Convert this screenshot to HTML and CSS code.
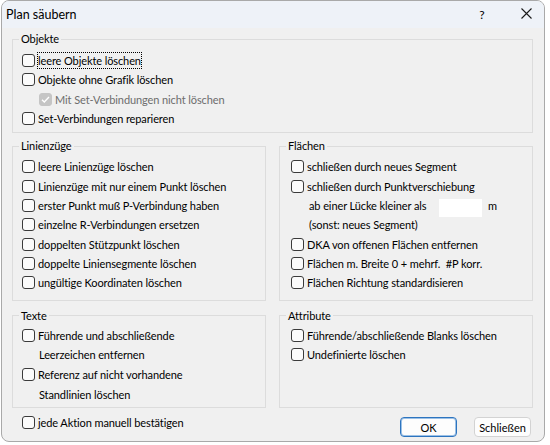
FILE: index.html
```html
<!DOCTYPE html>
<html lang="de">
<head>
<meta charset="utf-8">
<title>Plan säubern</title>
<link rel="stylesheet" href="styles.css">
</head>
<body>
<div class="window">
  <div class="titlebar">
    <span class="title">Plan säubern</span>
    <span class="help">?</span>
    <span class="close"><svg width="11" height="11" viewBox="0 0 11 11"><path d="M0.5 0.5 L10.5 10.5 M10.5 0.5 L0.5 10.5" stroke="#1a1a1a" stroke-width="1.1" fill="none"/></svg></span>
  </div>
  <div class="content">
    <fieldset class="group g-objekte">
      <legend>Objekte</legend>
      <div class="row"><span class="cb"></span><span class="txt focus">leere Objekte löschen</span></div>
      <div class="row"><span class="cb"></span><span class="txt">Objekte ohne Grafik löschen</span></div>
      <div class="row sub disabled"><span class="cb checked"><svg width="11" height="11" viewBox="0 0 11 11"><path d="M2 5.8 L4.3 8 L9 3" stroke="#fff" stroke-width="1.4" fill="none"/></svg></span><span class="txt">Mit Set-Verbindungen nicht löschen</span></div>
      <div class="row"><span class="cb"></span><span class="txt">Set-Verbindungen reparieren</span></div>
    </fieldset>

    <div class="pair pair-mid">
      <fieldset class="group g-left g-mid">
        <legend>Linienzüge</legend>
        <div class="row"><span class="cb"></span><span class="txt">leere Linienzüge löschen</span></div>
        <div class="row"><span class="cb"></span><span class="txt">Linienzüge mit nur einem Punkt löschen</span></div>
        <div class="row"><span class="cb"></span><span class="txt">erster Punkt muß P-Verbindung haben</span></div>
        <div class="row"><span class="cb"></span><span class="txt">einzelne R-Verbindungen ersetzen</span></div>
        <div class="row"><span class="cb"></span><span class="txt">doppelten Stützpunkt löschen</span></div>
        <div class="row"><span class="cb"></span><span class="txt">doppelte Liniensegmente löschen</span></div>
        <div class="row"><span class="cb"></span><span class="txt">ungültige Koordinaten löschen</span></div>
      </fieldset>
      <fieldset class="group g-right g-mid">
        <legend>Flächen</legend>
        <div class="row"><span class="cb"></span><span class="txt">schließen durch neues Segment</span></div>
        <div class="row"><span class="cb"></span><span class="txt">schließen durch Punktverschiebung</span></div>
        <div class="row indent"><span class="txt gaplabel">ab einer Lücke kleiner als</span><span class="field"></span><span class="unit">m</span></div>
        <div class="row indent"><span class="txt">(sonst: neues Segment)</span></div>
        <div class="row"><span class="cb"></span><span class="txt">DKA von offenen Flächen entfernen</span></div>
        <div class="row"><span class="cb"></span><span class="txt">Flächen m. Breite 0 + mehrf.&nbsp; #P korr.</span></div>
        <div class="row"><span class="cb"></span><span class="txt">Flächen Richtung standardisieren</span></div>
      </fieldset>
    </div>

    <div class="pair pair-low">
      <fieldset class="group g-left g-low">
        <legend>Texte</legend>
        <div class="row"><span class="cb"></span><span class="txt">Führende und abschließende</span></div>
        <div class="row indent"><span class="txt">Leerzeichen entfernen</span></div>
        <div class="row"><span class="cb"></span><span class="txt">Referenz auf nicht vorhandene</span></div>
        <div class="row indent"><span class="txt">Standlinien löschen</span></div>
      </fieldset>
      <fieldset class="group g-right g-low">
        <legend>Attribute</legend>
        <div class="row"><span class="cb"></span><span class="txt">Führende/abschließende Blanks löschen</span></div>
        <div class="row"><span class="cb"></span><span class="txt">Undefinierte löschen</span></div>
      </fieldset>
    </div>

    <div class="footer">
      <div class="row confirm"><span class="cb"></span><span class="txt">jede Aktion manuell bestätigen</span></div>
      <button class="btn default" type="button">OK</button>
      <button class="btn" type="button">Schließen</button>
    </div>
  </div>
</div>
</body>
</html>
```

FILE: styles.css
```css
* { box-sizing: border-box; }

html, body {
  margin: 0;
  padding: 0;
}

body {
  width: 550px;
  height: 445px;
  overflow: hidden;
  background: #ffffff;
  font-family: "Lato", "Noto Sans", "DejaVu Sans", sans-serif;
  font-size: 11px;
  letter-spacing: -0.1px;
  color: #000;
}

.window {
  margin-left: 1px;
  width: 544px;
  height: 442px;
  border: 1px solid #a9a9a9;
  border-radius: 8px;
  background: #f0f0f0;
  overflow: hidden;
  display: flex;
  flex-direction: column;
}

.titlebar {
  height: 27px;
  flex: none;
  display: flex;
  align-items: center;
  padding-left: 4px;
  background: #eef2f8;
}

.title {
  flex: 1;
  font-size: 12.5px;
  letter-spacing: 0;
}

.help {
  width: 10px;
  text-align: center;
  font-size: 12px;
  margin-right: 34px;
}

.close {
  display: flex;
  width: 11px;
  height: 11px;
  margin-right: 12px;
  margin-top: -2px;
}

.content {
  flex: 1;
  display: flex;
  flex-direction: column;
  padding: 3px 11px 0 10px;
}

.group {
  margin: 0;
  min-width: 0;
  border: 1px solid #dcdcdc;
  padding: 4px 6px 4px 6px;
}

.group legend {
  padding: 0 2px;
  line-height: 16px;
}

.g-objekte {
  padding-top: 4px;
  padding-bottom: 4px;
}

.pair {
  display: grid;
  grid-template-columns: 254px 254px;
  column-gap: 13px;
}

.pair-mid { margin-top: 5px; }
.pair-low { margin-top: 7px; }

.g-mid {
  padding-top: 3px;
  padding-bottom: 7px;
}

.g-low {
  padding-top: 1.5px;
  padding-bottom: 3px;
}

.row {
  display: flex;
  align-items: center;
  height: 19.33px;
  padding-left: 3px;
  white-space: nowrap;
}

.g-right .row { padding-left: 5px; }

.g-low .row { height: 19.8px; }

.row.sub { padding-left: 20px; }
.row.indent { padding-left: 20px; }
.g-right .row.indent { padding-left: 23px; }

.cb {
  flex: none;
  width: 13px;
  height: 13px;
  margin-right: 3px;
  border: 1px solid #3a3a3a;
  border-radius: 3px;
  background: #fbfbfb;
  display: flex;
  align-items: center;
  justify-content: center;
}

.cb.checked {
  background: #c5c5c5;
  border-color: #c5c5c5;
}

.txt {
  display: inline-block;
  line-height: 15px;
}

.disabled .txt { color: #6d6d6d; }

.focus {
  outline: 1px dotted #000;
  outline-offset: 0;
}

.gaplabel {
  width: 130px;
  flex: none;
}

.field {
  flex: none;
  width: 43px;
  height: 18px;
  margin-top: 4px;
  background: #fff;
}

.unit {
  margin-left: 6px;
}

.footer {
  display: flex;
  align-items: flex-start;
  margin-top: 5px;
  padding-left: 10px;
  padding-right: 2px;
}

.footer .confirm {
  flex: 1;
  padding-left: 0;
}

.btn {
  width: 57px;
  height: 20px;
  margin-top: 4px;
  margin-left: 17px;
  padding: 0;
  border: 1px solid #d3d3d3;
  border-radius: 4px;
  background: #fdfdfd;
  font: inherit;
  color: #000;
}

.btn.default {
  border: 1px solid #2d74bf;
  box-shadow: inset 0 0 0 1px #9cc1e6;
}
```
